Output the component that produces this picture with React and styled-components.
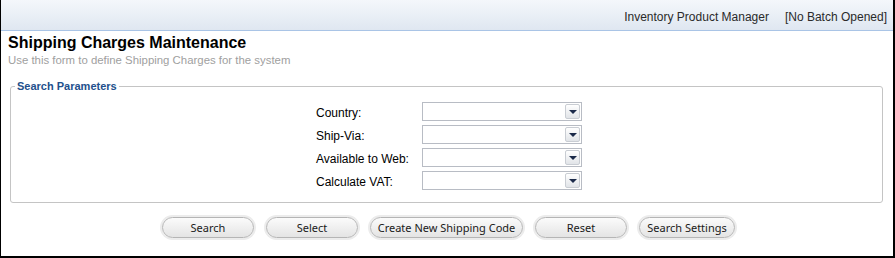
import React from "react";
import styled, { createGlobalStyle } from "styled-components";

const GlobalStyle = createGlobalStyle`
  body {
    margin: 0;
    background: #fff;
    font-family: "Liberation Sans", Arial, sans-serif;
  }
`;

const Frame = styled.div`
  width: 895px;
  height: 258px;
  box-sizing: border-box;
  border-left: 1px solid #000;
  border-right: 2px solid #000;
  border-bottom: 2px solid #000;
  display: flex;
  flex-direction: column;
  overflow: hidden;
`;

const TopBar = styled.div`
  height: 31px;
  border-bottom: 1px solid #a9c4e6;
  background: linear-gradient(#f4f7fb, #dfe7f1);
  display: flex;
  align-items: center;
  justify-content: flex-end;
  gap: 16px;
  padding: 3px 6px 0 0;
  box-sizing: border-box;
  font-size: 12px;
  color: #2a2a2a;
`;

const Body = styled.div`
  padding: 2px 10px 0 7px;
`;

const Title = styled.h1`
  margin: 0;
  font-size: 16px;
  font-weight: bold;
  color: #000;
  line-height: 20px;
`;

const Subtitle = styled.div`
  font-size: 11.4px;
  color: #a0a0a0;
  line-height: 14px;
`;

const Fieldset = styled.fieldset`
  margin: 13px 0 0 2px;
  padding: 3px 0 9px 0;
  border: 1px solid #c4c4c4;
  border-radius: 3px;
  height: 123px;
  box-sizing: border-box;
`;

const Legend = styled.legend`
  margin-left: 4px;
  padding: 0 2px;
  font-size: 11px;
  font-weight: bold;
  color: #23508c;
`;

const Grid = styled.div`
  display: grid;
  grid-template-columns: 106px 160px;
  row-gap: 4px;
  margin-left: 305px;
  margin-top: 7px;
`;

const Label = styled.label`
  font-size: 12px;
  color: #000;
  display: flex;
  align-items: center;
  height: 19px;
  box-sizing: border-box;
  padding-top: 2px;
`;

const Select = styled.div`
  height: 19px;
  box-sizing: border-box;
  border: 1px solid #b8bcc4;
  background: #fff;
  display: flex;
  justify-content: flex-end;
  padding: 1px;
`;

const Arrow = styled.div`
  width: 15px;
  height: 15px;
  box-sizing: border-box;
  border: 1px solid #c9cdd3;
  border-radius: 2px;
  background: linear-gradient(#ffffff, #e1e4e8);
  display: flex;
  align-items: center;
  justify-content: center;
  &::after {
    content: "";
    border-left: 4px solid transparent;
    border-right: 4px solid transparent;
    border-top: 4px solid #1b2a4a;
  }
`;

const Buttons = styled.div`
  display: flex;
  justify-content: center;
  gap: 12px;
  margin-top: 14px;
  padding-left: 6px;
`;

const Button = styled.button`
  width: ${(p) => p.w || 92}px;
  height: 21px;
  border: 1px solid #b5b5b5;
  border-radius: 11px;
  background: linear-gradient(#fbfbfb, #e4e4e4);
  box-shadow: 0 0 0 2px #ececec;
  font-family: "Noto Sans", sans-serif;
  font-size: 11px;
  color: #1a1a1a;
  padding: 0;
  cursor: pointer;
`;

const fields = ["Country:", "Ship-Via:", "Available to Web:", "Calculate VAT:"];

const App = () => {
  return (
    <Frame>
      <GlobalStyle />
      <TopBar>
        <span>Inventory Product Manager</span>
        <span>[No Batch Opened]</span>
      </TopBar>
      <Body>
        <Title>Shipping Charges Maintenance</Title>
        <Subtitle>Use this form to define Shipping Charges for the system</Subtitle>
        <Fieldset>
          <Legend>Search Parameters</Legend>
          <Grid>
            {fields.map((f) => (
              <React.Fragment key={f}>
                <Label>{f}</Label>
                <Select>
                  <Arrow />
                </Select>
              </React.Fragment>
            ))}
          </Grid>
        </Fieldset>
        <Buttons>
          <Button>Search</Button>
          <Button>Select</Button>
          <Button w={153}>Create New Shipping Code</Button>
          <Button>Reset</Button>
          <Button w={96}>Search Settings</Button>
        </Buttons>
      </Body>
    </Frame>
  );
};

export default App;
